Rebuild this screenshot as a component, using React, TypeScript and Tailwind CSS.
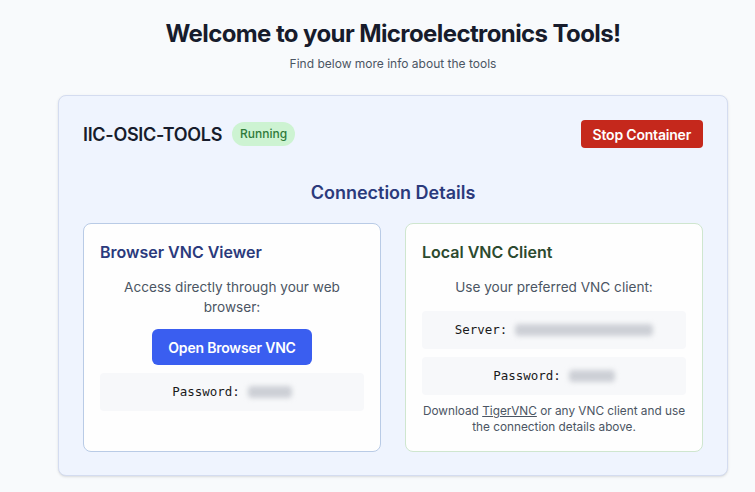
import React from 'react';

const mono = "font-['DejaVu_Sans_Mono','Liberation_Mono',monospace]";

function Secret({ w }: { w: string }) {
  return <span className={`inline-block h-[12px] ${w} rounded-sm bg-[#cdd0d6] blur-[2.5px] align-middle`} />;
}

export default function App() {
  return (
    <div className="min-h-screen bg-[#f8fafc] font-['Inter','Noto_Sans',sans-serif] text-[#1a202c]">
      <div className="ml-[58px] w-[670px] pt-[18px]">
        <h1 className="text-center text-[24px] font-bold leading-[32px] tracking-tight text-[#171c2c]">
          Welcome to your Microelectronics Tools!
        </h1>
        <p className="mt-[4px] text-center text-[12px] leading-[20px] text-[#4b5563]">
          Find below more info about the tools
        </p>

        <div className="mt-[21px] rounded-lg border border-[#d4dcf0] bg-[#eff4fe] px-[24px] pt-[24px] pb-[23px] shadow-sm">
          <div className="flex h-[28px] items-center justify-between">
            <div className="flex items-center gap-[10px]">
              <h2 className="text-[18px] font-semibold tracking-[-0.3px] text-[#171c2c]">IIC-OSIC-TOOLS</h2>
              <span className="rounded-full bg-[#cdf3d2] px-[8px] py-[3px] text-[12px] font-medium leading-[18px] text-[#2f7a3a]">
                Running
              </span>
            </div>
            <button className="h-[28px] rounded-[4px] bg-[#c5281c] px-[12px] text-[14px] font-semibold tracking-[-0.2px] text-white">
              Stop Container
            </button>
          </div>

          <h3 className="mt-[31px] text-center text-[18px] font-semibold leading-[28px] text-[#2b3a7c]">
            Connection Details
          </h3>

          <div className="mt-[16px] grid grid-cols-2 gap-[24px]">
            <div className="rounded-lg border border-[#b9cbe6] bg-[#fefefe] p-[16px]">
              <h4 className="text-[16px] font-semibold leading-[24px] text-[#2b3a7c]">Browser VNC Viewer</h4>
              <p className="mt-[13px] text-center text-[13.6px] leading-[20px] text-[#4b5563]">
                Access directly through your web browser:
              </p>
              <div className="mt-[12px] flex justify-center">
                <button className="h-[36px] rounded-[6px] bg-[#3a5ef0] px-[16px] text-[14px] font-semibold tracking-[-0.2px] text-white">
                  Open Browser VNC
                </button>
              </div>
              <div className={`mt-[8px] flex h-[38px] items-center justify-center gap-[8px] rounded-[4px] bg-[#f7f8fa] text-[12.5px] text-[#1a1a1a] ${mono}`}>
                <span>Password:</span>
                <Secret w="w-[44px]" />
              </div>
            </div>

            <div className="rounded-lg border border-[#cfe6cf] bg-[#fefefe] p-[16px]">
              <h4 className="text-[16px] font-semibold leading-[24px] text-[#2c4a2f]">Local VNC Client</h4>
              <p className="mt-[13px] text-center text-[13.6px] leading-[20px] text-[#4b5563]">
                Use your preferred VNC client:
              </p>
              <div className={`mt-[14px] flex h-[38px] items-center justify-center gap-[8px] rounded-[4px] bg-[#f7f8fa] text-[12.5px] text-[#1a1a1a] ${mono}`}>
                <span>Server:</span>
                <Secret w="w-[138px]" />
              </div>
              <div className={`mt-[8px] flex h-[38px] items-center justify-center gap-[8px] rounded-[4px] bg-[#f7f8fa] text-[12.5px] text-[#1a1a1a] ${mono}`}>
                <span>Password:</span>
                <Secret w="w-[46px]" />
              </div>
              <p className="-mx-[4px] mt-[8px] text-center text-[11.8px] leading-[16px] text-[#4b5563]">
                Download <span className="underline">TigerVNC</span> or any VNC client and use the connection details above.
              </p>
            </div>
          </div>
        </div>
      </div>
    </div>
  );
}
